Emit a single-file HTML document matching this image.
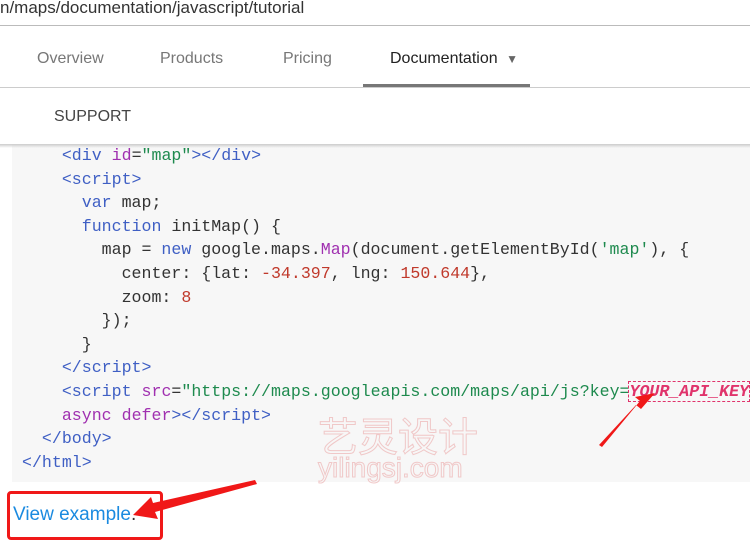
<!DOCTYPE html><html><head><style>
body{margin:0;width:750px;height:550px;overflow:hidden;background:#fff;font-family:"Liberation Sans",sans-serif;position:relative}
.url{position:absolute;left:0;top:-2px;font-size:17px;color:#333;}
.hr{position:absolute;left:0;width:750px;height:1px;background:#ccc}
.tab{position:absolute;top:50px;font-size:16px;color:#777}
pre{position:absolute;left:12px;top:144px;width:738px;height:338px;margin:0;background:#f7f7f7;font-family:"Liberation Mono",monospace;font-size:16.6px;line-height:23.6px;color:#333;padding:0 0 0 10px;box-sizing:border-box;white-space:pre}
.t{color:#3f5fc4}.a{color:#a030b0}.s{color:#1e8a4e}.k{color:#3f5fc4}.n{color:#c0392b}
</style></head><body>
<div class="url">n/maps/documentation/javascript/tutorial</div>
<div class="hr" style="top:25px;background:#bbb"></div>
<div class="tab" style="left:37px">Overview</div>
<div class="tab" style="left:160px">Products</div>
<div class="tab" style="left:283px">Pricing</div>
<div class="tab" style="left:390px;color:#222">Documentation <span style="font-size:12px;color:#666;margin-left:4px">▼</span></div>
<div style="position:absolute;left:363px;top:84px;width:167px;height:3px;background:#777"></div>
<div class="hr" style="top:87px"></div>
<div style="position:absolute;left:54px;top:108px;font-size:16px;color:#444">SUPPORT</div>
<pre>    <span class="t">&lt;div</span> <span class="a">id</span>=<span class="s">"map"</span><span class="t">&gt;&lt;/div&gt;</span>
    <span class="t">&lt;script&gt;</span>
      <span class="k">var</span> map;
      <span class="k">function</span> initMap() {
        map = <span class="k">new</span> google.maps.<span class="a">Map</span>(document.getElementById(<span class="s">'map'</span>), {
          center: {lat: <span class="n">-34.397</span>, lng: <span class="n">150.644</span>},
          zoom: <span class="n">8</span>
        });
      }
    <span class="t">&lt;/script&gt;</span>
    <span class="t">&lt;script</span> <span class="a">src</span>=<span class="s">"https://maps.googleapis.com/maps/api/js?key=<span style="outline:1px dashed #e0336b;color:#e0336b;font-style:italic;font-weight:bold">YOUR_API_KEY</span></span>
    <span class="a">async</span> <span class="a">defer</span><span class="t">&gt;&lt;/script&gt;</span>
  <span class="t">&lt;/body&gt;</span>
<span class="t">&lt;/html&gt;</span></pre>
<div style="position:absolute;left:0;top:144px;width:750px;height:4px;background:linear-gradient(#ccc,rgba(0,0,0,0))"></div>
<div style="position:absolute;left:318px;top:412px;font-size:40px;color:transparent;-webkit-text-stroke:1px #f0c8c8;font-family:'Noto Sans CJK SC',sans-serif;line-height:44px">艺灵设计</div>
<div style="position:absolute;left:318px;top:452px;font-size:28px;color:transparent;-webkit-text-stroke:1px #f0c8c8">yilingsj.com</div>
<div style="position:absolute;left:7px;top:491px;width:150px;height:43px;border:3px solid #f01818;border-radius:4px"></div>
<div style="position:absolute;left:13px;top:504px;font-size:19px;color:#1a8ae0">View example<span style="color:#333">.</span></div>
<svg style="position:absolute;left:0;top:0" width="750" height="550">
<polygon points="255,480 153,503 151,497 133,515 158,519 155,512 257,484" fill="#f01818"/>
<polygon points="599,445 636,405 641,409 655,393 635,397 640,401 602,447" fill="#f01818"/>
</svg>
</body></html>
